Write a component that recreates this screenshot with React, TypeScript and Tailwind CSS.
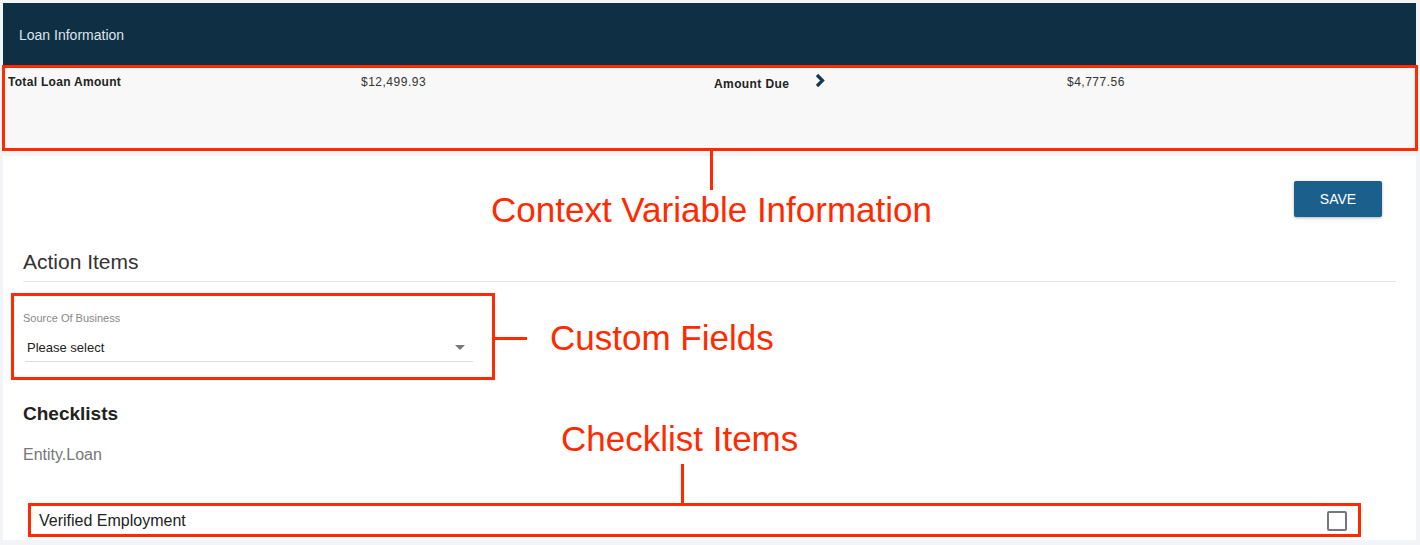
const font = "font-['Liberation_Sans',Arial,sans-serif]";

function Chevron() {
  return (
    <svg width="12" height="15" viewBox="0 0 12 15" className="mt-[-2px]">
      <path
        d="M3 2 L8.5 7.5 L3 13"
        fill="none"
        stroke="#17384f"
        strokeWidth="3.2"
      />
    </svg>
  );
}

function CaretDown() {
  return (
    <svg width="10" height="6" viewBox="0 0 10 6">
      <path d="M0 0 L10 0 L5 5 Z" fill="#777" />
    </svg>
  );
}

export default function App() {
  return (
    <div
      className={`${font} relative h-[545px] w-[1420px] overflow-hidden bg-[#f3f4f8] pt-[3px]`}
    >
      {/* header */}
      <div className="ml-[3px] flex h-[62px] w-[1413px] items-center bg-[#0f2f44] pt-[3px] pl-[16px] text-[14px] text-[#dde5ea]">
        Loan Information
      </div>

      {/* context variables */}
      <div className="ml-[2px] h-[86px] w-[1416px] border-[3px] border-[#ff2a00] bg-[#f8f8f8] pt-[7px] pl-[3px]">
        <div className="grid grid-cols-[353px_353px_353px_353px] text-[12px] leading-[14px] text-[#222]">
          <div className="font-bold tracking-[0.3px]">Total Loan Amount</div>
          <div className="tracking-[0.5px] text-[#333]">$12,499.93</div>
          <div className="flex items-start gap-[25px]">
            <span className="mt-[2px] font-bold tracking-[0.4px]">
              Amount Due
            </span>
            <Chevron />
          </div>
          <div className="tracking-[0.5px] text-[#333]">$4,777.56</div>
        </div>
      </div>

      {/* main card */}
      <div className="relative mt-[5px] ml-[3px] w-[1413px] bg-white pt-[25px] pb-[3px]">
        <div className="absolute top-[-6px] left-[707px] h-[40px] w-[3px] bg-[#ff2a00]" />
        <div className="absolute top-[34px] left-[488px] text-[35px] leading-[40px] text-[#ff2a00]">
          Context Variable Information
        </div>

        <div className="flex justify-end pr-[34px]">
          <button
            type="button"
            className="h-[36px] w-[88px] rounded-[2px] bg-[#1b5f8c] text-[14px] text-white uppercase shadow-[0_1px_3px_rgba(0,0,0,0.3)]"
          >
            Save
          </button>
        </div>

        <h2 className="mt-[33px] pl-[20px] text-[21px] leading-[24px] text-[#333]">
          Action Items
        </h2>
        <div className="mx-[20px] mt-[7px] h-px bg-[#e6e6e6]" />

        {/* custom fields */}
        <div className="relative mt-[11px] ml-[8px] h-[87px] w-[484px] border-[3px] border-[#ff2a00] pt-[15px] pl-[9px]">
          <div className="text-[11px] leading-[14px] text-[#888]">
            Source Of Business
          </div>
          <div className="mt-[14px] ml-[2px] flex h-[23px] w-[448px] items-start justify-between border-b border-[#dcdcdc] pr-[8px] pl-[2px]">
            <span className="text-[13px] leading-[18px] text-[#222]">
              Please select
            </span>
            <span className="mt-[6px]">
              <CaretDown />
            </span>
          </div>
          <div className="absolute top-[41px] left-[100%] h-[3px] w-[35px] bg-[#ff2a00]" />
          <div className="absolute top-[22px] left-[536px] text-[35px] leading-[40px] whitespace-nowrap text-[#ff2a00]">
            Custom Fields
          </div>
        </div>

        <h3 className="mt-[23px] pl-[20px] text-[19px] leading-[22px] font-bold text-[#222]">
          Checklists
        </h3>
        <div className="mt-[20px] pl-[20px] text-[16px] leading-[20px] text-[#777]">
          Entity.Loan
        </div>

        {/* checklist items */}
        <div className="relative mt-[38px] ml-[25px] flex h-[34px] w-[1333px] items-center justify-between border-[3px] border-[#ff2a00] pt-[2px] pr-[11px] pl-[8px]">
          <span className="text-[16px] leading-[20px] text-[#222]">
            Verified Employment
          </span>
          <span className="h-[20px] w-[20px] rounded-[2px] border-2 border-[#777]" />
          <div className="absolute top-[-42px] left-[650px] h-[40px] w-[3px] bg-[#ff2a00]" />
          <div className="absolute top-[-87px] left-[530px] text-[35px] leading-[40px] whitespace-nowrap text-[#ff2a00]">
            Checklist Items
          </div>
        </div>
      </div>
    </div>
  );
}
